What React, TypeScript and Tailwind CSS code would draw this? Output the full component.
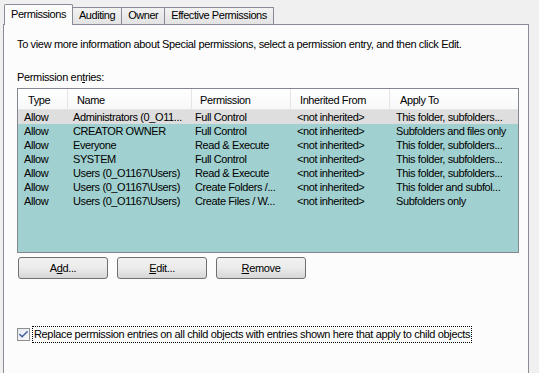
import { Check } from "lucide-react";

const rows = [
  ["Allow", "Administrators (0_O11...", "Full Control", "<not inherited>", "This folder, subfolders..."],
  ["Allow", "CREATOR OWNER", "Full Control", "<not inherited>", "Subfolders and files only"],
  ["Allow", "Everyone", "Read & Execute", "<not inherited>", "This folder, subfolders..."],
  ["Allow", "SYSTEM", "Full Control", "<not inherited>", "This folder, subfolders..."],
  ["Allow", "Users (0_O1167\\Users)", "Read & Execute", "<not inherited>", "This folder, subfolders..."],
  ["Allow", "Users (0_O1167\\Users)", "Create Folders /...", "<not inherited>", "This folder and subfol..."],
  ["Allow", "Users (0_O1167\\Users)", "Create Files / W...", "<not inherited>", "Subfolders only"],
];

const Tab = ({ label, active }: { label: string; active?: boolean }) =>
  active ? (
    <div className="relative z-10 -mb-px h-[21px] px-[6px] pt-[3px] border border-b-0 border-[#898c95] bg-[#fcfcfc] rounded-t-[2px]">
      {label}
    </div>
  ) : (
    <div className="h-[17px] mt-[3px] -ml-px px-[6px] pt-[1px] border border-b-0 border-[#898c95] bg-gradient-to-b from-[#f2f2f2] to-[#e3e3e3]">
      {label}
    </div>
  );

const Btn = ({ pre, u, post }: { pre: string; u: string; post: string }) => (
  <button className="w-[90px] h-[22px] rounded-[3px] border border-[#707070] bg-gradient-to-b from-[#f2f2f2] via-[#ebebeb] to-[#d6d6d6] text-black flex items-center justify-center">
    {pre}
    <span className="underline underline-offset-1">{u}</span>
    {post}
  </button>
);

export default function App() {
  return (
    <div
      className="w-[539px] h-[373px] overflow-hidden bg-[#f0f0f0] pl-[3px] text-[11px] leading-[13px] tracking-[-0.35px] text-black"
      style={{ fontFamily: '"Liberation Sans", Arial, sans-serif' }}
    >
      {/* tabs */}
      <div className="flex items-end pt-[4px] pl-px tracking-[-0.45px]">
        <Tab label="Permissions" active />
        <Tab label="Auditing" />
        <Tab label="Owner" />
        <Tab label="Effective Permissions" />
      </div>

      {/* panel */}
      <div className="w-[526px] h-[360px] border border-[#898c95] bg-[#fcfcfc] pl-[13px] pt-[13px]">
        <p>To view more information about Special permissions, select a permission entry, and then click Edit.</p>
        <p className="mt-[20px]">
          Permission en<span className="underline underline-offset-1">t</span>ries:
        </p>

        {/* list */}
        <div className="mt-[4px] w-[502px] h-[165px] border border-[#828790] bg-[#a0d0cf] flex flex-col tracking-[-0.4px]">
          <div className="h-[21px] flex bg-gradient-to-b from-white to-[#f7f8f9] border-b border-[#e5e5e5]">
            <div className="w-[50px] pl-[10px] pt-[5px] border-r border-[#e5e5e5]">Type</div>
            <div className="w-[124px] pl-[9px] pt-[5px] border-r border-[#e5e5e5]">Name</div>
            <div className="w-[99px] pl-[8px] pt-[5px] border-r border-[#e5e5e5]">Permission</div>
            <div className="w-[99px] pl-[9px] pt-[5px] border-r border-[#e5e5e5]">Inherited From</div>
            <div className="flex-1 pl-[10px] pt-[5px]">Apply To</div>
          </div>
          {rows.map((r, i) => (
            <div
              key={i}
              className={`flex h-[14px] leading-[14px] ${i === 0 ? "bg-[#dedede]" : ""}`}
            >
              <div className="w-[50px] pl-[6px] whitespace-nowrap">{r[0]}</div>
              <div className="w-[124px] pl-[5px] whitespace-nowrap">{r[1]}</div>
              <div className="w-[99px] pl-[3px] whitespace-nowrap">{r[2]}</div>
              <div className="w-[99px] pl-[6px] whitespace-nowrap">{r[3]}</div>
              <div className="flex-1 pl-[6px] whitespace-nowrap">{r[4]}</div>
            </div>
          ))}
        </div>

        {/* buttons */}
        <div className="mt-[4px] ml-px flex gap-[9px]">
          <Btn pre="A" u="d" post="d..." />
          <Btn pre="" u="E" post="dit..." />
          <Btn pre="" u="R" post="emove" />
        </div>

        {/* checkbox */}
        <div className="mt-[47px] flex items-center">
          <div className="w-[13px] h-[13px] border border-[#8e8f8f] bg-gradient-to-br from-[#e4e8ee] to-[#f8f9fb] flex items-center justify-center">
            <Check className="w-[11px] h-[11px] text-[#4b62a3]" strokeWidth={3.5} />
          </div>
          <span className="ml-[2px] px-px h-[17px] leading-[15px] border border-dotted border-black">
            Replace permission entries on all child objects with entries shown here that apply to child objects
          </span>
        </div>
      </div>
    </div>
  );
}
